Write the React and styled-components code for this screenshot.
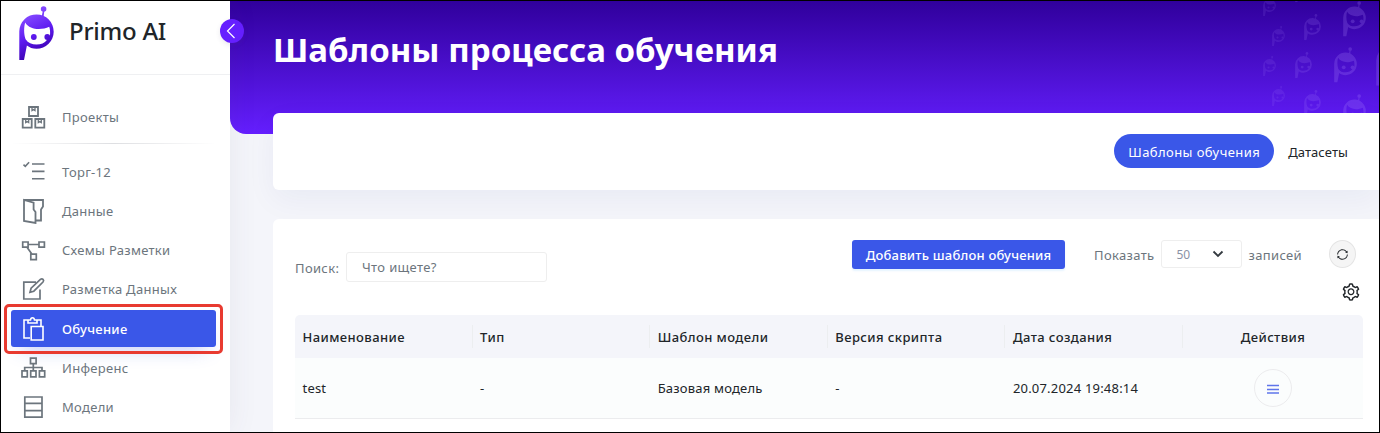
import React from "react";
import styled, { createGlobalStyle, css } from "styled-components";
import { AiOutlineSetting, AiOutlineSync } from "react-icons/ai";

const Global = createGlobalStyle`
  * { box-sizing: border-box; }
  body { margin: 0; background: #f4f5fa; font-family: "Noto Sans", "Open Sans", sans-serif; font-size: 13px; color: #212529; }
`;

const Frame = styled.div`
  display: flex;
  width: 1380px;
  height: 433px;
  border: 1px solid #000;
  background: #f4f5fa;
  overflow: hidden;
`;

const Sidebar = styled.aside`
  position: relative;
  z-index: 2;
  flex: none;
  width: 229px;
  background: #fff;
  box-shadow: 0 0 28px rgba(82, 63, 105, 0.08);
`;

const Brand = styled.div`
  display: flex;
  height: 74px;
  padding: 5px 0 0 18px;
  border-bottom: 1px solid #eff0f2;
`;

const BrandLogo = styled.svg`
  width: 35px;
  height: 54px;
`;

const BrandName = styled.span`
  margin: 7px 0 0 15px;
  font-size: 24px;
  line-height: 36px;
  font-weight: 500;
  letter-spacing: -0.25px;
  white-space: nowrap;
`;

const Collapse = styled.button`
  position: absolute;
  top: 18px;
  right: -14px;
  display: grid;
  place-items: center;
  width: 24px;
  height: 24px;
  padding: 0;
  border: 0;
  border-radius: 50%;
  background: #651fff;
  box-shadow: 0 2px 5px rgba(82, 63, 105, 0.12);
`;

const Nav = styled.nav`
  display: flex;
  flex-direction: column;
  gap: 2.2px;
  padding: 23.3px 14px 0 10px;
`;

const Divider = styled.hr`
  width: 205px;
  height: 1px;
  margin: 5.7px 0 6.9px;
  border: 0;
  background: linear-gradient(90deg, transparent, #dedfe2 50%, transparent);
`;

const NavItem = styled.a`
  position: relative;
  display: flex;
  align-items: center;
  gap: 14px;
  height: 37px;
  padding-left: 10px;
  border-radius: 3px;
  color: #6c757d;
  letter-spacing: 0.3px;
  white-space: nowrap;
  ${(p) => p.$active && css`
    background: #3a57e8;
    color: #fff;
    font-weight: 500;
    box-shadow: 0 10px 20px -10px rgba(58, 87, 232, 0.4);
    &::after {
      content: "";
      position: absolute;
      inset: -6px -7px -7px;
      border: 3px solid #e83a30;
      border-radius: 5px;
    }
  `}
`;

const NavIcon = styled.svg`
  width: 27px;
  height: 26px;
  fill: none;
  stroke: currentColor;
  stroke-width: 1.8;
`;

const Main = styled.main`
  flex: 1;
  min-width: 0;
`;

const Hero = styled.header`
  position: relative;
  height: 133px;
  padding: 27px 0 0 43px;
  border-bottom-left-radius: 16px;
  background: linear-gradient(180deg, #30009c, #651fff);
  overflow: hidden;
`;

const Title = styled.h1`
  margin: 0;
  color: #fff;
  font-size: 33px;
  line-height: 44px;
  font-weight: 700;
  letter-spacing: 0.03px;
  white-space: nowrap;
`;

const HeroPattern = styled.svg`
  position: absolute;
  top: 0;
  right: 0;
  width: 119px;
  height: 133px;
`;

const Panel = styled.section`
  position: relative;
  margin-left: 43px;
  border-radius: 6px;
  background: #fff;
`;

const Tabs = styled(Panel)`
  display: flex;
  justify-content: flex-end;
  align-items: center;
  height: 77px;
  margin-top: -21px;
  padding: 0 17px 1px 0;
  border-top-right-radius: 0;
  border-bottom-right-radius: 0;
  box-shadow: 0 10px 30px rgba(17, 38, 146, 0.05);
`;

const Tab = styled.button`
  height: 34px;
  padding: 2px 14px 0;
  border: 0;
  border-radius: 17px;
  background: ${(p) => (p.$active ? "#3a57e8" : "transparent")};
  color: ${(p) => (p.$active ? "#fff" : "#212529")};
  font: inherit;
  letter-spacing: ${(p) => (p.$active ? "0.42px" : "0.1px")};
  white-space: nowrap;
`;

const Content = styled(Panel)`
  height: 240px;
  margin-top: 29px;
  padding: 21px 16px 0 22px;
  border-top-right-radius: 0;
`;

const Toolbar = styled.div`
  display: flex;
  justify-content: space-between;
  color: #6c757d;
  height: 35px;
  letter-spacing: 0.35px;
`;

const Search = styled.label`
  display: flex;
  align-items: center;
  gap: 6px;
  height: 30px;
  margin-top: 12px;
`;

const SearchLabel = styled.span`
  width: 45px;
  padding-top: 1px;
`;

const SearchInput = styled.input`
  width: 201px;
  height: 30px;
  padding: 0 15px;
  border: 1px solid #eee;
  border-radius: 3px;
  background: #fff;
  font: inherit;
  letter-spacing: inherit;
  outline: 0;
  &::placeholder { color: #6c757d; opacity: 1; }
`;

const Controls = styled.div`
  display: flex;
  align-items: center;
  height: 29px;
  padding-right: 7px;
  white-space: nowrap;
`;

const AddButton = styled.button`
  width: 213px;
  height: 29px;
  margin-right: 29px;
  padding: 0;
  border: 0;
  border-radius: 3px;
  background: #3a57e8;
  box-shadow: 0 2px 2px rgba(5, 145, 255, 0.1);
  color: #fff;
  font: inherit;
  font-weight: 500;
  letter-spacing: 0.2px;
`;

const PageSize = styled.div`
  display: flex;
  align-items: center;
  justify-content: space-between;
  width: 81px;
  height: 28px;
  margin: 0 7px 1px 6px;
  padding: 0 17px 0 15px;
  border: 1px solid #eee;
  border-radius: 3px;
  color: #8a92a6;
  font-size: 12px;
  letter-spacing: 0;
`;

const Refresh = styled.button`
  display: grid;
  place-items: center;
  width: 27px;
  height: 28px;
  margin: 0 0 1px 27px;
  padding: 0;
  border: 1px solid #e4e4e4;
  border-radius: 50%;
  background: #f5f5f5;
  color: #212529;
`;

const Settings = styled.div`
  display: flex;
  justify-content: flex-end;
  height: 40px;
  padding: 7px 2px 0 0;
`;

const Table = styled.div`
  width: 1068px;
`;

const Row = styled.div`
  display: grid;
  grid-template-columns: repeat(5, 177.6px) 1fr;
  align-items: center;
  height: ${(p) => (p.$head ? "43px" : "61px")};
  background: ${(p) => (p.$head ? "#f4f5fa" : "#fbfdfd")};
  border-radius: ${(p) => (p.$head ? "5px 5px 0 0" : "0")};
  border-bottom: ${(p) => (p.$head ? "0" : "1px solid #ebecee")};
  font-weight: ${(p) => (p.$head ? 500 : 400)};
  letter-spacing: ${(p) => (p.$head ? "0.42px" : "0.2px")};
`;

const Cell = styled.div`
  display: flex;
  align-items: center;
  height: ${(p) => (p.$head ? "23px" : "100%")};
  padding: 0 7.5px;
  border-right: ${(p) => (p.$head ? "1px solid #eceef0" : "0")};
  white-space: nowrap;
  &:last-child { justify-content: center; border-right: 0; }
`;

const RowMenu = styled.button`
  display: grid;
  place-items: center;
  width: 38px;
  height: 38px;
  padding: 2px 0 0;
  border: 1px solid #ececee;
  border-radius: 50%;
  background: transparent;
`;

function Robot() {
  return (
    <>
      <circle cx="43.6" cy="9" r="2.8" />
      <path d="M42.9 10.5H44.4L43.4 18H41.4Z" />
      <path
        fillRule="evenodd"
        d="M19.3 60V31.3A17.2 17.2 0 1 1 36.5 48.8C32.5 48.8 29.5 47.5 26.9 45.5L24 60ZM25.2 22.5C23.8 27 23.7 34 25.6 39.3C28 43 32 44.6 36.5 44.6C41 44.6 44.7 43 46.9 40L50 35.5C50.3 32 50 29 49.2 26.8C42 30.2 30 30.5 25.2 22.5Z"
      />
      <circle cx="33.8" cy="37" r="2.9" />
      <circle cx="47.3" cy="37" r="2.9" />
    </>
  );
}

const NAV = [
  {
    label: "Проекты",
    icon: (
      <>
        <path d="M8 3h9v9H8zM1.7 15h9v8.7h-9zM14.3 15h9v8.7h-9z" />
        <path d="M11 3v3.6l1.5-1 1.5 1V3M4.7 15v3.6l1.5-1 1.5 1V15M17.3 15v3.6l1.5-1 1.5 1V15" strokeWidth="1.3" />
      </>
    ),
  },
  { label: "Торг-12", icon: <path d="M2.5 5.6l1.8 1.7 3.8-4M11 5h12.5M11 12.4h12.5M11 19.8h12.5" strokeWidth="1.6" /> },
  {
    label: "Данные",
    icon: <path d="M3 2H22V8.5L20 11.5V22.5H15M3 2V23L14.5 25V14L12.6 11.5V4.7L3 2Z" strokeWidth="1.8" />,
  },
  {
    label: "Схемы Разметки",
    icon: <path d="M1.7 5h5.4v5.2H1.7zM18 5h5.4v5.2H18zM9.8 17.2h5.5v5.5H9.8zM7 7.5h11M6 10.2l5 7" strokeWidth="1.7" />,
  },
  {
    label: "Разметка Данных",
    icon: (
      <>
        <path d="M15 6.2H2.8V23H19V13.5" strokeWidth="1.7" />
        <path d="M9 16.2l1.1-4L19.4 3.4c2-1.6 4.2.6 2.6 2.6L12.8 15.2Z" strokeWidth="1.7" />
      </>
    ),
  },
  {
    label: "Обучение",
    active: true,
    icon: <path d="M9 22H3V4h4v3h9V4h4v6M7 4h2.5C9.8 1 13.2 1 13.5 4H16M10.2 10.5H22V24H10.2z" strokeWidth="1.6" />,
  },
  {
    label: "Инференс",
    icon: <path d="M9.5 3.2h5.6v5.4H9.5zM1 15.8h5.3v6H1zM9.7 15.8H15v6H9.7zM18.4 15.8h5.3v6h-5.3zM12.3 8.6v7M3.7 15.6v-3.1h17.3v3.1" strokeWidth="1.7" />,
  },
  { label: "Модели", icon: <path d="M3.8 3H21v20.2H3.8zM3.8 9.4H21M3.8 16.6H21" strokeWidth="1.7" /> },
];

const ROBOTS = [
  [1263, -4, 13], [1272, 26, 13], [1263, 56, 13], [1272, 86, 13],
  [1295, -24, 17], [1304, 14, 17], [1295, 52, 17], [1304, 90, 17],
  [1343, 1, 23], [1334, 47, 23], [1343, 94, 23], [1376, 38, 31],
];

const HEADERS = ["Наименование", "Тип", "Шаблон модели", "Версия скрипта", "Дата создания", "Действия"];
const VALUES = ["test", "-", "Базовая модель", "-", "20.07.2024 19:48:14"];

export default function App() {
  return (
    <Frame>
      <Global />
      <Sidebar>
        <Brand>
          <BrandLogo viewBox="19 6 35 54" fill="url(#brand)">
            <defs>
              <linearGradient id="brand" gradientUnits="userSpaceOnUse" x1="24" y1="18" x2="42" y2="54">
                <stop offset="0" stopColor="#8247ff" />
                <stop offset="0.5" stopColor="#5d1aef" />
                <stop offset="1" stopColor="#3a00ad" />
              </linearGradient>
            </defs>
            <Robot />
          </BrandLogo>
          <BrandName>Primo AI</BrandName>
        </Brand>
        <Collapse>
          <svg width="24" height="24" fill="none" stroke="#fff" strokeWidth="1.2">
            <path d="M14.5 5L7.5 12l7 7" />
          </svg>
        </Collapse>
        <Nav>
          {NAV.map((item, i) => (
            <React.Fragment key={item.label}>
              <NavItem $active={item.active}>
                <NavIcon viewBox="0 0 27 26">{item.icon}</NavIcon>
                {item.label}
              </NavItem>
              {i === 0 && <Divider />}
            </React.Fragment>
          ))}
        </Nav>
      </Sidebar>
      <Main>
        <Hero>
          <Title>Шаблоны процесса обучения</Title>
          <HeroPattern viewBox="1260 1 119 133" fill="#b08cff">
            {ROBOTS.map(([x, y, w]) => (
              <svg key={`${x}-${y}`} x={x} y={y} width={w} height={(w * 54) / 35} viewBox="19 6 35 54" opacity={w < 15 ? 0.12 : w < 20 ? 0.16 : 0.22}>
                <Robot />
              </svg>
            ))}
          </HeroPattern>
        </Hero>
        <Tabs>
          <Tab $active>Шаблоны обучения</Tab>
          <Tab>Датасеты</Tab>
        </Tabs>
        <Content>
          <Toolbar>
            <Search>
              <SearchLabel>Поиск:</SearchLabel>
              <SearchInput placeholder="Что ищете?" />
            </Search>
            <Controls>
              <AddButton>Добавить шаблон обучения</AddButton>
              Показать
              <PageSize>
                50
                <svg width="12" height="8" fill="none" stroke="#343a40" strokeWidth="1.8">
                  <path d="M1.5 1.5L6 6l4.5-4.5" />
                </svg>
              </PageSize>
              записей
              <Refresh><AiOutlineSync size={13} /></Refresh>
            </Controls>
          </Toolbar>
          <Settings><AiOutlineSetting size={20} color="#212529" /></Settings>
          <Table>
            <Row $head>
              {HEADERS.map((h) => <Cell $head key={h}>{h}</Cell>)}
            </Row>
            <Row>
              {VALUES.map((v, i) => <Cell key={i}>{v}</Cell>)}
              <Cell>
                <RowMenu>
                  <svg width="12" height="10" stroke="#5f75ea" strokeWidth="1.4">
                    <path d="M0 1.5h12M0 5.5h12M0 9h12" />
                  </svg>
                </RowMenu>
              </Cell>
            </Row>
          </Table>
        </Content>
      </Main>
    </Frame>
  );
}
